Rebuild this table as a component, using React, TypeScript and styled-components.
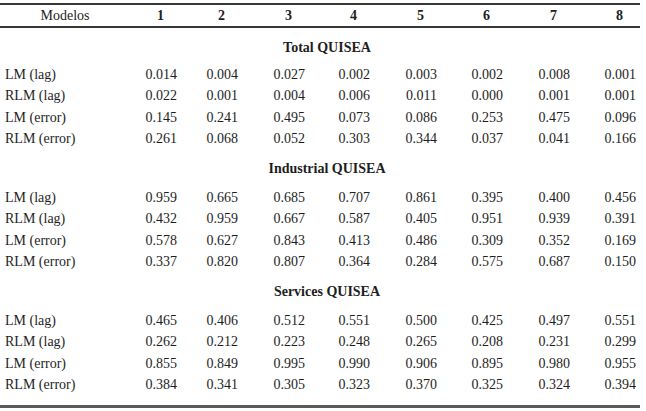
import styled, { createGlobalStyle } from 'styled-components'

const GlobalStyle = createGlobalStyle`
  html, body {
    margin: 0;
    padding: 0;
    background: #ffffff;
  }
  body {
    font-family: "Liberation Serif", "Times New Roman", serif;
    color: #1e1e1e;
  }
`;

const Wrapper = styled.div`
  width: 646px;
  height: 411px;
  padding-top: 3px;
  box-sizing: border-box;
  background: #ffffff;
`;

const Table = styled.table`
  width: 640px;
  border-collapse: collapse;
  table-layout: fixed;
  font-size: 14px;
  border-top: 2px solid #363636;
  border-bottom: 3px solid #5a5a5a;
`;

const HeadRow = styled.tr`
  height: 23px;
  border-bottom: 2px solid #363636;
`;

const HeadCell = styled.th<{ $label?: boolean }>`
  padding: 0 ${({ $label }) => ($label ? '0' : '17px')} 0 0;
  text-align: ${({ $label }) => ($label ? 'center' : 'right')};
  font-weight: ${({ $label }) => ($label ? 'normal' : 'bold')};
  line-height: 18px;
  vertical-align: middle;
`;

const SectionRow = styled.tr`
  height: 37px;
`;

const SectionCell = styled.td<{ $first?: boolean }>`
  padding: ${({ $first }) => ($first ? '11px' : '10px')} 0 0 14px;
  text-align: center;
  font-weight: bold;
  line-height: 18px;
  vertical-align: top;
`;

const DataRow = styled.tr`
  height: 21.5px;
`;

const LabelCell = styled.td`
  padding: 0 0 0 5px;
  text-align: left;
  line-height: 18px;
  white-space: nowrap;
`;

const ValueCell = styled.td`
  padding: 0 4px 0 0;
  text-align: right;
  line-height: 18px;
`;

const Spacer = styled.tr`
  height: 10px;
`;

const widths = [130, 51, 61, 67, 65, 67, 66, 67, 66];
const labels = ['LM (lag)', 'RLM (lag)', 'LM (error)', 'RLM (error)'];

const sections = [
  {
    title: 'Total QUISEA',
    rows: [
      ['0.014', '0.004', '0.027', '0.002', '0.003', '0.002', '0.008', '0.001'],
      ['0.022', '0.001', '0.004', '0.006', '0.011', '0.000', '0.001', '0.001'],
      ['0.145', '0.241', '0.495', '0.073', '0.086', '0.253', '0.475', '0.096'],
      ['0.261', '0.068', '0.052', '0.303', '0.344', '0.037', '0.041', '0.166'],
    ],
  },
  {
    title: 'Industrial QUISEA',
    rows: [
      ['0.959', '0.665', '0.685', '0.707', '0.861', '0.395', '0.400', '0.456'],
      ['0.432', '0.959', '0.667', '0.587', '0.405', '0.951', '0.939', '0.391'],
      ['0.578', '0.627', '0.843', '0.413', '0.486', '0.309', '0.352', '0.169'],
      ['0.337', '0.820', '0.807', '0.364', '0.284', '0.575', '0.687', '0.150'],
    ],
  },
  {
    title: 'Services QUISEA',
    rows: [
      ['0.465', '0.406', '0.512', '0.551', '0.500', '0.425', '0.497', '0.551'],
      ['0.262', '0.212', '0.223', '0.248', '0.265', '0.208', '0.231', '0.299'],
      ['0.855', '0.849', '0.995', '0.990', '0.906', '0.895', '0.980', '0.955'],
      ['0.384', '0.341', '0.305', '0.323', '0.370', '0.325', '0.324', '0.394'],
    ],
  },
];

const App = () => {
  return (
    <>
      <GlobalStyle />
      <Wrapper>
        <Table>
          <colgroup>
            {widths.map((w, i) => (
              <col key={i} style={{ width: w }} />
            ))}
          </colgroup>
          <thead>
            <HeadRow>
              <HeadCell $label>Modelos</HeadCell>
              {[1, 2, 3, 4, 5, 6, 7, 8].map((n) => (
                <HeadCell key={n}>{n}</HeadCell>
              ))}
            </HeadRow>
          </thead>
          <tbody>
            {sections.map((section, si) => (
              <>
                <SectionRow key={section.title}>
                  <SectionCell colSpan={9} $first={si === 0}>
                    {section.title}
                  </SectionCell>
                </SectionRow>
                {section.rows.map((row, ri) => (
                  <DataRow key={section.title + ri}>
                    <LabelCell>{labels[ri]}</LabelCell>
                    {row.map((val, ci) => (
                      <ValueCell key={ci}>{val}</ValueCell>
                    ))}
                  </DataRow>
                ))}
              </>
            ))}
            <Spacer>
              <td colSpan={9} />
            </Spacer>
          </tbody>
        </Table>
      </Wrapper>
    </>
  )
}

export default App
